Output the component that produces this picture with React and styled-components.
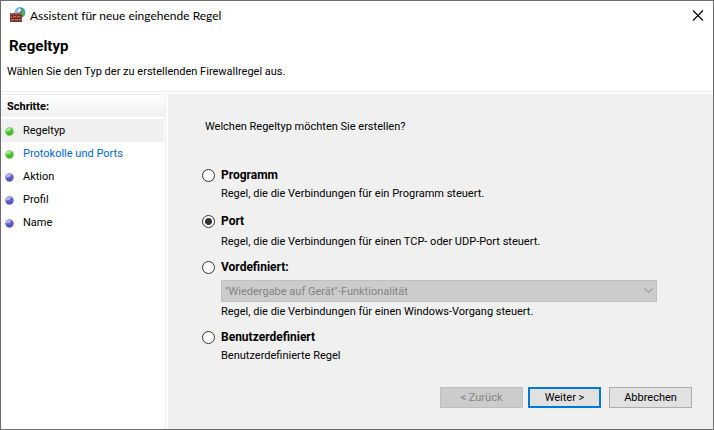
import React, { useState } from 'react'
import styled, { createGlobalStyle } from 'styled-components'

const COLORS = {
  FRAME: '#6e6b6c',
  WHITE: '#ffffff',
  PANEL: '#f0f0f0',
  LINE: '#eeeeee',
  TEXT: '#000000',
  LINK: '#0066cc',
  ACCENT: '#0078d7',
  DISABLED: '#cccccc',
  DISABLED_BORDER: '#bfbfbf',
  DISABLED_TEXT: '#838383'
}

const GlobalStyle = createGlobalStyle`
  * {
    box-sizing: border-box;
  }

  body {
    margin: 0;
    font: 11px/18px Roboto, sans-serif;
    color: ${COLORS.TEXT};
  }

  button, select {
    font: inherit;
  }
`

const Window = styled.div`
  display: flex;
  flex-direction: column;
  min-height: 100vh;
  border: 1px solid ${COLORS.FRAME};
  background: ${COLORS.WHITE};
`

const TitleBar = styled.header`
  display: flex;
  align-items: center;
  gap: 3px;
  height: 30px;
  padding: 0 9px 0 8px;
  font-family: Lato, sans-serif;
  font-size: 12px;
`

const Title = styled.span`
  flex: 1;
`

const CloseButton = styled.button`
  display: flex;
  padding: 0;
  border: none;
  background: none;
`

const Intro = styled.div`
  padding: 5px 6px 10px;
  border-bottom: 1px solid ${COLORS.LINE};
`

const Heading = styled.h1`
  margin: 0 0 7px;
  padding-left: 2px;
  font-size: 15px;
  line-height: 20px;
`

const Text = styled.p`
  margin: 0;
`

const Body = styled.div`
  display: flex;
  flex: 1;
  gap: 2px;
  padding-top: 2px;
`

const Sidebar = styled.nav`
  width: 165px;
  flex-shrink: 0;
  border-top: 1px solid ${COLORS.LINE};
  border-right: 1px solid ${COLORS.LINE};
`

const SidebarTitle = styled.h2`
  margin: 0 0 2px;
  padding: 3px 6px 1px;
  background: linear-gradient(${COLORS.WHITE}, ${COLORS.PANEL});
  font-size: 11px;
  line-height: 18px;
`

const Steps = styled.ol`
  margin: 0;
  padding: 0 1px 0 0;
  list-style: none;
`

const Step = styled.li`
  display: flex;
  align-items: center;
  gap: 9px;
  height: 23px;
  padding: 1px 0 0 4px;
  background: ${({ $current }) => $current ? COLORS.PANEL : 'none'};
`

const StepLink = styled.a`
  color: ${COLORS.LINK};
  text-decoration: none;
`

const Main = styled.main`
  display: flex;
  flex: 1;
  flex-direction: column;
  padding: 24px 21px 21px 34px;
  background: ${COLORS.PANEL};
`

const Question = styled.p`
  margin: 0 0 30px;
  padding-left: 3px;
`

const Options = styled.div`
  display: grid;
  grid-template-rows: 46px 46px 70px auto;
`

const Option = styled.div`
  display: grid;
  grid-template-columns: 13px 1fr;
  align-content: start;
  align-items: center;
  column-gap: 6px;
  padding-right: 35px;
`

const Radio = styled.input`
  appearance: none;
  width: 13px;
  height: 13px;
  margin: 0;
  border: 1px solid #333333;
  border-radius: 50%;
  background: ${COLORS.WHITE};

  &:checked {
    background: radial-gradient(circle, #333333 3px, ${COLORS.WHITE} 4px);
  }
`

const OptionLabel = styled.label`
  font-size: 12px;
  font-weight: bold;
`

const Description = styled.p`
  grid-column: 2;
  margin: ${({ $gap }) => $gap || 1}px 0 0;
`

const SelectWrapper = styled.div`
  position: relative;
  grid-column: 2;
  margin-top: 4px;

  svg {
    position: absolute;
    right: 4px;
    top: 8px;
  }
`

const Select = styled.select`
  display: block;
  appearance: none;
  width: 100%;
  height: 22px;
  padding: 1px 20px 0 3px;
  border: 1px solid ${COLORS.DISABLED_BORDER};
  border-radius: 0;
  background: ${COLORS.DISABLED};
  color: ${COLORS.DISABLED_TEXT};
  opacity: 1;
`

const Actions = styled.div`
  display: flex;
  justify-content: flex-end;
  gap: 8px;
  margin-top: auto;
`

const Button = styled.button`
  width: ${({ $primary }) => $primary ? 73 : 83}px;
  height: 21px;
  padding: 0;
  border: ${({ $primary }) => $primary ? `2px solid ${COLORS.ACCENT}` : '1px solid #adadad'};
  background: #e1e1e1;
  color: ${COLORS.TEXT};
  line-height: 16px;

  &:disabled {
    border-color: ${COLORS.DISABLED_BORDER};
    background: ${COLORS.DISABLED};
    color: ${COLORS.DISABLED_TEXT};
  }
`

const ButtonPair = styled.div`
  display: flex;
  gap: 5px;
`

const FirewallIcon = () => (
  <svg width="18" height="18" viewBox="0 0 18 18" aria-hidden="true">
    <circle cx="11" cy="5.5" r="5.3" fill="#2478d0" />
    <path d="M6 4.500C7 1.500 9.500 .5 12 .6L11 3 9 4 8 6H6z" fill="#7cc4f2" />
    <path d="M12 1.500l2 .5 2 3-.5 3-2 2-1.500-3 1-2z" fill="#4fb53c" />
    <path d="M9 2.500l2-1 1.500 1.500-2 2.500-2 .5z" fill="#dcf3fd" />
    <path d="M1 6h12v9H1z" fill="#9a4735" />
    <path d="M1 8.500h12M1 11.500h12M1 14.500h12M5.500 6v2M9.500 6v2M3.500 9v2M7.500 9v2M11.500 9v2M5.500 12v2M9.500 12v2" stroke="#6e3428" fill="none" />
    <path d="M2 6.500h3M6 6.500h3M10 6.500h3M4 9.500h3M8 9.500h3M2 12.500h3M6 12.500h3M10 12.500h3" stroke="#bd6a52" />
  </svg>
)

const CloseIcon = () => (
  <svg width="12" height="12" viewBox="0 0 12 12" aria-hidden="true">
    <path d="M1 .5l10 10M11 .5L1 10.500" stroke="#000" strokeWidth="1.100" />
  </svg>
)

const Dot = ({ done }) => (
  <svg width="9" height="9" viewBox="0 0 9 9" aria-hidden="true">
    <circle cx="4.500" cy="4.500" r="4.200" fill={done ? '#52c936' : '#6262cc'} />
    <path d="M.6 4.500A4 4 0 0 1 6.500 1L4.500 4z" fill={done ? '#a5e39b' : '#b4b4e8'} />
    <path d="M1 6.500L8 5A4 4 0 0 1 1 6.500z" fill={done ? '#46b52f' : '#5353b8'} />
  </svg>
)

const STEPS = [
  { name: 'Regeltyp', done: true, current: true },
  { name: 'Protokolle und Ports', done: true, link: true },
  { name: 'Aktion' },
  { name: 'Profil' },
  { name: 'Name' }
]

const OPTIONS = [
  { id: 'programm', label: 'Programm', text: 'Regel, die die Verbindungen für ein Programm steuert.' },
  { id: 'port', label: 'Port', text: 'Regel, die die Verbindungen für einen TCP- oder UDP-Port steuert.', gap: 3 },
  {
    id: 'vordefiniert',
    label: 'Vordefiniert:',
    text: 'Regel, die die Verbindungen für einen Windows-Vorgang steuert.',
    choices: ['"Wiedergabe auf Gerät"-Funktionalität']
  },
  { id: 'benutzerdefiniert', label: 'Benutzerdefiniert', text: 'Benutzerdefinierte Regel' }
]

const App = () => {
  const [type, setType] = useState('port')

  return (
    <Window>
      <GlobalStyle />
      <TitleBar>
        <FirewallIcon />
        <Title>Assistent für neue eingehende Regel</Title>
        <CloseButton aria-label="Schließen"><CloseIcon /></CloseButton>
      </TitleBar>
      <Intro>
        <Heading>Regeltyp</Heading>
        <Text>Wählen Sie den Typ der zu erstellenden Firewallregel aus.</Text>
      </Intro>
      <Body>
        <Sidebar>
          <SidebarTitle>Schritte:</SidebarTitle>
          <Steps>
            {STEPS.map(({ name, done, current, link }) => (
              <Step key={name} $current={current}>
                <Dot done={done} />
                {link ? <StepLink href="#">{name}</StepLink> : name}
              </Step>
            ))}
          </Steps>
        </Sidebar>
        <Main>
          <Question id="question">Welchen Regeltyp möchten Sie erstellen?</Question>
          <Options role="radiogroup" aria-labelledby="question">
            {OPTIONS.map(({ id, label, text, gap, choices }) => (
              <Option key={id}>
                <Radio type="radio" name="type" id={id} checked={type === id} onChange={() => setType(id)} />
                <OptionLabel htmlFor={id}>{label}</OptionLabel>
                {choices && (
                  <SelectWrapper>
                    <Select aria-label={label} disabled={type !== id}>
                      {choices.map(choice => <option key={choice}>{choice}</option>)}
                    </Select>
                    <svg width="9" height="6" viewBox="0 0 9 6" aria-hidden="true">
                      <path d="M.5 .5l4 4 4-4" fill="none" stroke="#a0a0a0" strokeWidth="1.200" />
                    </svg>
                  </SelectWrapper>
                )}
                <Description $gap={gap}>{text}</Description>
              </Option>
            ))}
          </Options>
          <Actions>
            <ButtonPair>
              <Button disabled>&lt; Zurück</Button>
              <Button $primary>Weiter &gt;</Button>
            </ButtonPair>
            <Button>Abbrechen</Button>
          </Actions>
        </Main>
      </Body>
    </Window>
  )
}

export default App
